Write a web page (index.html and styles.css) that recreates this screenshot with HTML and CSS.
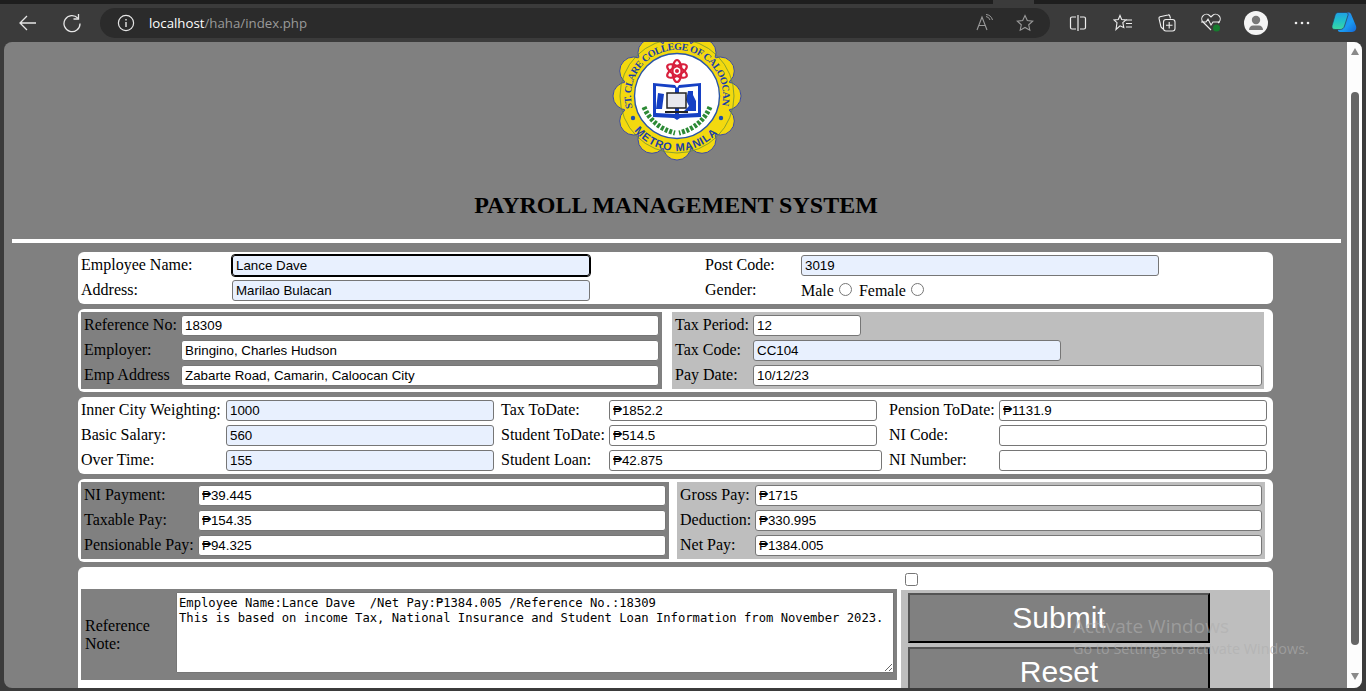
FILE: index.html
```html
<!DOCTYPE html>
<html lang="en">
<head>
<meta charset="utf-8">
<title>Payroll Management System</title>
<link rel="stylesheet" href="styles.css">
</head>
<body>
<div class="tabstrip"><span class="tabgap"></span></div>
<header class="toolbar">
  <svg class="navicon" width="20" height="20" viewBox="0 0 20 20"><path d="M18 10H2M9 3l-7 7 7 7" fill="none" stroke="#e6e6e6" stroke-width="1.3"/></svg>
  <svg class="navicon nav2" width="20" height="20" viewBox="0 0 20 20"><path d="M15.9 5.2A8 8 0 1 0 18 10.5" fill="none" stroke="#e6e6e6" stroke-width="1.3"/><path d="M16.5 1v5h-5" fill="none" stroke="#e6e6e6" stroke-width="1.3"/></svg>
  <div class="address">
    <svg width="18" height="18" viewBox="0 0 18 18"><circle cx="9" cy="9" r="7.6" fill="none" stroke="#e6e6e6" stroke-width="1.2"/><path d="M9 8v5M9 5v1.5" stroke="#e6e6e6" stroke-width="1.4"/></svg>
    <span class="url"><b>localhost</b>/haha/index.php</span>
    <svg class="addr-a" width="18" height="18" viewBox="0 0 18 18"><path d="M1 16 6 3l5 13M3 11.5h6" fill="none" stroke="#9a9a9a" stroke-width="1.1"/><path d="M10 2.5a5 5 0 0 1 4 3.500M10 .5a7.500 7.500 0 0 1 6.500 5.500" fill="none" stroke="#9a9a9a" stroke-width="1"/></svg>
    <svg class="addr-star" width="18" height="18" viewBox="0 0 18 18"><path d="M9 1.500l2.300 5 5.400.6-4 3.700 1.100 5.400L9 13.500 4.200 16.200l1.100-5.400-4-3.700 5.400-.6z" fill="none" stroke="#9a9a9a" stroke-width="1.1"/></svg>
  </div>
  <div class="tools">
    <span class="tool"><svg width="18" height="18" viewBox="0 0 18 18"><path d="M7 3H3a1.500 1.500 0 0 0-1.500 1.500v9A1.500 1.500 0 0 0 3 15h4M11 3h4a1.500 1.500 0 0 1 1.500 1.500v9A1.500 1.500 0 0 1 15 15h-4M9 1v16" fill="none" stroke="#eee" stroke-width="1.2"/></svg></span>
    <span class="tool"><svg width="20" height="18" viewBox="0 0 20 18"><path d="M7 1.500l1.700 4 4.300.4-3.200 2.800 1 4.800L7 11.800 3 15.500l1-6.800L1 5.900l4.300-.4z" fill="none" stroke="#eee" stroke-width="1.1"/><path d="M13 6h6M13 9.500h6M13 13h6" stroke="#eee" stroke-width="1.1"/></svg></span>
    <span class="tool"><svg width="20" height="20" viewBox="0 0 20 20"><path d="M6 16 4 14 2 5.500A1.500 1.500 0 0 1 3 3.800L11 2a1.500 1.500 0 0 1 1.800 1l.7 2.500" fill="none" stroke="#eee" stroke-width="1.1"/><rect x="6.500" y="6.500" width="11.500" height="11.500" rx="2.500" fill="#3b3b3b" stroke="#eee" stroke-width="1.1"/><path d="M12.200 9v6.500M9 12.200h6.500" stroke="#eee" stroke-width="1.1"/></svg></span>
    <span class="tool"><svg width="22" height="20" viewBox="0 0 22 20"><path d="M11 17 3 9a4.600 4.600 0 0 1 6.500-6.500L11 4l1.500-1.500A4.600 4.600 0 0 1 19 9l-1 1" fill="none" stroke="#eee" stroke-width="1.1"/><path d="M1 9h5l2-3 3 6 2-3h7" fill="none" stroke="#eee" stroke-width="1.1"/><circle cx="16.500" cy="15" r="3.500" fill="#167c2e"/></svg></span>
    <span class="tool"><span class="avatar"><svg width="24" height="24" viewBox="0 0 24 24"><circle cx="12" cy="9" r="4.200" fill="#777"/><path d="M5 19c0-3 2-4.500 4-4.500h6c2 0 4 1.500 4 4.500z" fill="#777"/></svg></span></span>
    <span class="tool"><svg width="16" height="4" viewBox="0 0 16 4"><circle cx="2" cy="2" r="1.300" fill="#eee"/><circle cx="8" cy="2" r="1.300" fill="#eee"/><circle cx="14" cy="2" r="1.300" fill="#eee"/></svg></span>
    <span class="tool"><svg width="26" height="24" viewBox="0 0 26 24"><defs><linearGradient id="cpa" x1="0" y1="0" x2="0" y2="1"><stop offset="0" stop-color="#1f9fe4"/><stop offset=".55" stop-color="#22c3c4"/><stop offset="1" stop-color="#3ed8a0"/></linearGradient><linearGradient id="cpb" x1="0" y1="0" x2="1" y2="1"><stop offset="0" stop-color="#2f7fe8"/><stop offset=".6" stop-color="#1a9af0"/><stop offset="1" stop-color="#1466d8"/></linearGradient></defs><path d="M15.500 2c1.500-.7 3.500-.5 4.500 1L25 15c1 3.200-1 6-4 6H9c-1.500 0-2.500-1-2-2.500L13 6c.5-1.800 1.300-3.300 2.500-4z" fill="url(#cpb)"/><path d="M7 1.500h8c1.700 0 2.500 1 2 2.700L13.500 15c-.7 2.300-2.200 3.500-4.300 3.500H4c-2.300 0-3.500-1.600-3-3.700L4 4.500C4.500 2.500 5.500 1.500 7 1.500z" fill="url(#cpa)" stroke="#2a3a55" stroke-width=".7"/></svg></span>
  </div>
</header>
<div class="window">
  <main class="page">
    <svg class="logo" width="130" height="130" viewBox="0 0 130 130">
      <defs>
        <path id="arcTop" d="M20.600 76.900A46 46 0 1 1 109.400 76.900"/>
        <path id="arcBot" d="M20.500 97.300A55 55 0 0 0 109.500 97.300"/>
      </defs>
      <g fill="#f3d90f" stroke="#3a4aa8" stroke-width="1">
        <circle cx="65" cy="15" r="14"/><circle cx="90" cy="21.700" r="14"/><circle cx="108.300" cy="40" r="14"/><circle cx="115" cy="65" r="14"/><circle cx="108.300" cy="90" r="14"/><circle cx="90" cy="108.300" r="14"/><circle cx="65" cy="115" r="14"/><circle cx="40" cy="108.300" r="14"/><circle cx="21.700" cy="90" r="14"/><circle cx="15" cy="65" r="14"/><circle cx="21.700" cy="40" r="14"/><circle cx="40" cy="21.700" r="14"/>
      </g>
      <circle cx="65" cy="65" r="54" fill="#f3d90f"/>
      <circle cx="65" cy="65" r="57" fill="none" stroke="#5f8a3a" stroke-width=".7"/>
      <circle cx="65" cy="65" r="42.500" fill="#fff" stroke="#2a55a8" stroke-width="1.400"/>
      <text class="logo-top"><textPath href="#arcTop" textLength="166" lengthAdjust="spacing">ST. CLARE COLLEGE OF CALOOCAN</textPath></text>
      <text class="logo-bot"><textPath href="#arcBot" startOffset="3" textLength="94">METRO MANILA</textPath></text>
      <circle cx="21" cy="87" r="2.200" fill="#1d4fae"/><circle cx="109" cy="87" r="2.200" fill="#1d4fae"/>
      <g fill="none" stroke="#d81f3c" stroke-width="2.200">
        <ellipse cx="65" cy="40" rx="4.500" ry="11"/><ellipse cx="65" cy="40" rx="4.500" ry="11" transform="rotate(60 65 40)"/><ellipse cx="65" cy="40" rx="4.500" ry="11" transform="rotate(120 65 40)"/>
      </g>
      <circle cx="65" cy="40" r="2" fill="#d81f3c"/>
      <path d="M41 52l22 2 2 3 2-3 22-2v34l-21 1-3 2-3-2-21-1z" fill="#1640c4"/>
      <path d="M44 55l19 2v26l-19-1zM86 55l-19 2v26l19-1z" fill="#fff"/>
      <path d="M46 62l6 1-2 15h-6zM76 60h5v4l3 6v10H72l5-5-3-6z" fill="#1640c4"/>
      <rect x="55" y="62" width="19" height="15" fill="#e8e8ee" stroke="#222" stroke-width="1.500"/>
      <path d="M53 80h23v2H53z" fill="#222"/>
      <path d="M32 76c5 12 15 22 31 26" fill="none" stroke="#2c8a35" stroke-width="5" stroke-dasharray="3 1.500"/>
      <path d="M98 76c-5 12-15 22-31 26" fill="none" stroke="#2c8a35" stroke-width="5" stroke-dasharray="3 1.500"/>
    </svg>
    <h1 class="title">PAYROLL MANAGEMENT SYSTEM</h1>
    <div class="rule"></div>
    <form class="forms">
      <section class="panel p-info">
        <label>Employee Name:</label><input class="filled focus" type="text" value="Lance Dave">
        <span></span>
        <label>Post Code:</label><input class="filled" type="text" value="3019">
        <label>Address:</label><input class="filled" type="text" value="Marilao Bulacan">
        <span></span>
        <label>Gender:</label>
        <span>Male <input type="radio" name="g"> Female <input type="radio" name="g"></span>
      </section>
      <section class="panel split split-a">
        <div class="box dark ref">
          <label>Reference No:</label><input type="text" value="18309">
          <label>Employer:</label><input type="text" value="Bringino, Charles Hudson">
          <label>Emp Address</label><input type="text" value="Zabarte Road, Camarin, Caloocan City">
        </div>
        <div class="box light tax">
          <label>Tax Period:</label><input class="w108" type="text" value="12">
          <label>Tax Code:</label><input class="w308 filled" type="text" value="CC104">
          <label>Pay Date:</label><input class="w509" type="text" value="10/12/23">
        </div>
      </section>
      <section class="panel p-rates">
        <label>Inner City Weighting:</label><input class="filled" type="text" value="1000">
        <span></span>
        <label>Tax ToDate:</label><input type="text" value="₱1852.2">
        <span></span>
        <label>Pension ToDate:</label><input type="text" value="₱1131.9">
        <label>Basic Salary:</label><input class="filled" type="text" value="560">
        <span></span>
        <label>Student ToDate:</label><input type="text" value="₱514.5">
        <span></span>
        <label>NI Code:</label><input type="text">
        <label>Over Time:</label><input class="filled" type="text" value="155">
        <span></span>
        <label>Student Loan:</label><input class="w273" type="text" value="₱42.875">
        <span></span>
        <label>NI Number:</label><input type="text">
      </section>
      <section class="panel split split-b">
        <div class="box dark pay">
          <label>NI Payment:</label><input type="text" value="₱39.445">
          <label>Taxable Pay:</label><input type="text" value="₱154.35">
          <label>Pensionable Pay:</label><input type="text" value="₱94.325">
        </div>
        <div class="box light net">
          <label>Gross Pay:</label><input type="text" value="₱1715">
          <label>Deduction:</label><input type="text" value="₱330.995">
          <label>Net Pay:</label><input type="text" value="₱1384.005">
        </div>
      </section>
      <section class="panel p-note">
        <div class="box dark note">
          <label>Reference Note:</label>
          <textarea>Employee Name:Lance Dave  /Net Pay:₱1384.005 /Reference No.:18309
This is based on income Tax, National Insurance and Student Loan Information from November 2023.</textarea>
        </div>
        <div class="actions">
          <div class="checkrow"><input type="checkbox"></div>
          <div class="box light buttons">
            <button type="button">Submit</button>
            <button type="button">Reset</button>
          </div>
        </div>
      </section>
    </form>
  </main>
  <aside class="scrollbar">
    <span class="arrow-up"></span>
    <span class="thumb"></span>
    <span class="arrow-down"></span>
  </aside>
</div>
<div class="watermark">
  <div class="wm1">Activate Windows</div>
  <div class="wm2">Go to Settings to activate Windows.</div>
</div>
</body>
</html>
```
FILE: styles.css
```css
* { box-sizing: border-box; }
html, body { margin: 0; height: 691px; overflow: hidden; }
body { background: #3b3b3b; display: flex; flex-direction: column; font: 16px "Liberation Serif", serif; color: #000; }

.tabstrip { height: 4px; background: #1e1e1e; flex: none; position: relative; }
.tabgap { display: block; margin-left: 993px; width: 41px; height: 4px; background: #3b3b3b; }

.toolbar { height: 38px; flex: none; display: flex; align-items: flex-start; padding: 4px 0 0 18px; }
.navicon { margin-top: 5px; }
.nav2 { margin-left: 24px; }
.address { width: 950px; height: 30px; margin-left: 18px; background: #2b2b2b; border-radius: 15px; display: flex; align-items: center; padding: 0 16px 0 17px; }
.url { margin-left: 14px; padding-bottom: 1px; font: 13.250px "Open Sans", sans-serif; color: #9a9a9a; flex: 1; }
.url b { font-weight: 400; color: #fff; }
.addr-a { margin-right: 22px; }
.tools { display: flex; height: 30px; margin-left: 6px; }
.tool { width: 44px; height: 30px; display: flex; align-items: center; justify-content: center; }
.tool:nth-child(2) { width: 45px; }
.tool:nth-child(5) { width: 46px; }
.tool:nth-child(6) { width: 45px; }
.tool:nth-child(7) { width: 40px; }
.avatar { width: 24px; height: 24px; border-radius: 50%; background: #f4f4f4; display: block; }
.avatar svg { display: block; }

.window { flex: none; height: 646px; margin: 0 4px 3px 4px; display: flex; border-radius: 8px; overflow: hidden; background: #808080; }
.page { width: 1343px; flex: none; overflow: hidden; padding: 0 6px 0 8px; }
.logo { display: block; margin: -11px auto 0; }
.logo-top { font: bold 10px "Liberation Serif", serif; fill: #1b3fa6; }
.logo-bot { font: bold 11px "Liberation Sans", sans-serif; fill: #1b3fa6; }
.title { margin: 31px 0 0; padding-right: 1px; font: bold 24px/27px "Liberation Serif", serif; text-align: center; }
.rule { height: 4px; background: #fff; margin-top: 20px; }

.forms { width: 1195px; margin: 9px 0 0 66px; display: flex; flex-direction: column; gap: 5px; }
.panel { background: #fff; border-radius: 6px; padding: 3px; flex: none; }
.forms input[type=text] { width: 100%; height: 21px; padding: 1px 3px; border: 1px solid #767676; border-radius: 3px; background: #fff; font: 13.333px "Liberation Sans", sans-serif; color: #000; }
.forms input[type=text].filled { background: #e8f0fe; }
.forms input[type=text].focus { border-color: #000; outline: 1px solid #000; border-radius: 3px; }
.forms input[type=radio] { margin: 3px 3px 0 1px; }
.forms label { line-height: 19px; }
.p-info > span { line-height: 19px; }

.p-info { display: grid; grid-template-columns: 151px 358px 115px 96px 358px; row-gap: 4px; }
.p-rates { display: grid; grid-template-columns: 145px 268px 7px 108px 268px 12px 110px 268px; row-gap: 4px; }
.forms input[type=text].w273 { width: 273px; }
.forms input[type=text].w108 { width: 108px; }
.forms input[type=text].w308 { width: 308px; }
.forms input[type=text].w509 { width: 509px; }

.split { display: flex; }
.box { padding: 3px; }
.dark { background: #808080; }
.light { background: #bebebe; }
.ref, .tax, .pay, .net { display: grid; row-gap: 4px; }
.ref { width: 581px; grid-template-columns: 97px 478px; }
.tax { width: 592px; margin-left: 10px; grid-template-columns: 78px 509px; padding-right: 2px; }
.pay { width: 588px; grid-template-columns: 114px 468px; }
.net { width: 588px; margin-left: 8px; grid-template-columns: 75px 507px; }

.p-note { display: flex; padding: 0 0 0 3px; height: 140px; gap: 4px; }
.note { width: 816px; height: 91px; margin-top: 22px; padding: 3px 3px 7px 4px; display: grid; grid-template-columns: 91px 718px; align-items: center; }
.note label { line-height: 18px; margin-top: 4px; }
.note textarea { display: block; width: 718px; height: 81px; margin: 0; padding: 3px 2px 2px; font: 12.200px/15px "DejaVu Sans Mono", monospace; color: #000; align-self: start; }
.actions { width: 369px; }
.checkrow { height: 23px; padding-top: 6px; }
.checkrow input { display: block; margin: 0 0 0 4px; width: 13px; height: 13px; }
.buttons { padding: 3px 0 0 7px; height: 117px; display: flex; flex-direction: column; gap: 4px; }
.buttons button { width: 302px; height: 50px; flex: none; background: #808080; color: #fff; border: 2px outset #000; font: 30px "Liberation Sans", sans-serif; padding: 0 0 1px; }

.scrollbar { width: 15px; flex: none; background: #fdfdfd; display: flex; flex-direction: column; align-items: center; padding: 6px 0 8px; }
.arrow-up { width: 0; height: 0; border: 4.500px solid transparent; border-top: 0; border-bottom: 7px solid #8a8a8a; }
.thumb { width: 8px; height: 553px; background: #666; border-radius: 4px; margin: 37px 0 28px; }
.arrow-down { width: 0; height: 0; border: 4.500px solid transparent; border-bottom: 0; border-top: 7px solid #8a8a8a; }

.watermark { position: absolute; left: 1073px; top: 612px; color: rgba(175,175,175,.62); font-family: "Open Sans", sans-serif; pointer-events: none; }
.wm1 { font-size: 19px; line-height: 28px; }
.wm2 { font-size: 14.400px; line-height: 17px; white-space: nowrap; }
```
